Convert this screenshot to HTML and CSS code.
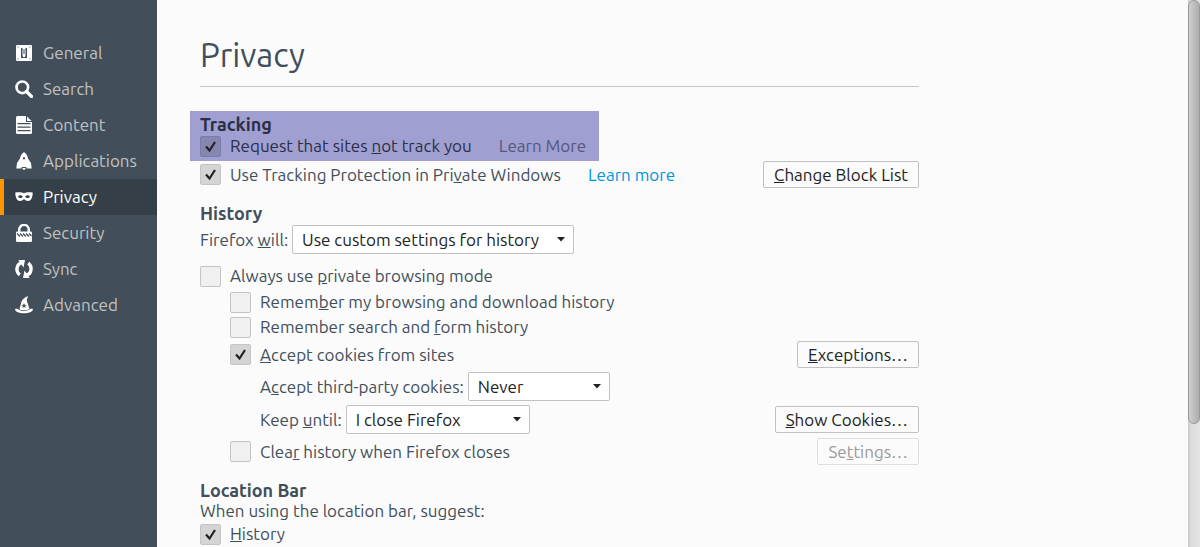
FILE: index.html
```html
<!DOCTYPE html>
<html lang="en">
  <head>
    <meta charset="UTF-8" />
    <meta name="viewport" content="width=device-width, initial-scale=1.0" />
    <title>Privacy</title>
    <link rel="stylesheet" href="styles.css">
  </head>
  <body>
    <nav class="sidebar">
      <a href="#general" class="nav-item">
        <svg class="icon" viewBox="0 0 18 18">
          <path fill-rule="evenodd" d="M2 1h14A1 1 0 0 1 17 2v14a1 1 0 0 1-1 1H2a1 1 0 0 1-1-1V2a1 1 0 0 1 1-1zM6 4v10h6V4zM2.500 2.500v1h1v-1zm12 0v1h1v-1zM2.500 14.500v1h1v-1zm12 0v1h1v-1z" />
          <path d="M7.500 4h3v7l-.5 2H8l-.5-2z" />
          <path d="M9 5v5" stroke="#424f5a" stroke-width="1" />
        </svg>
        General
      </a>
      <a href="#search" class="nav-item">
        <svg class="icon" viewBox="0 0 18 18">
          <circle cx="7.300" cy="7.300" r="5.800" fill="none" stroke="#fff" stroke-width="2.600" />
          <path d="M11.500 11.500l5 5" stroke="#fff" stroke-width="3.200" stroke-linecap="round" />
        </svg>
        Search
      </a>
      <a href="#content" class="nav-item">
        <svg class="icon" viewBox="0 0 18 18">
          <path fill-rule="evenodd" d="M2.500 0H11v6h6v10.500a1.500 1.500 0 0 1-1.500 1.500h-13A1.500 1.500 0 0 1 1 16.500v-15A1.500 1.500 0 0 1 2.500 0zM2.500 7v1.300h13V7zm0 3.500v1.300h13v-1.300zm0 3.500v1.300h13V14z" />
          <path d="M12 0.500L16.500 5H12z" />
        </svg>
        Content
      </a>
      <a href="#applications" class="nav-item">
        <svg class="icon" viewBox="0 0 18 18">
          <path fill-rule="evenodd" d="M9 0c2 1.400 3.600 3.500 4 6.500l3 4.500.7 5.500H12l-1-1.500H7l-1 1.500H1.300L2 11l3-4.500C5.400 3.500 7 1.400 9 0zm0 4.200L7.500 7.200h3z" />
          <path d="M7 16h4l-2 2.500z" />
        </svg>
        Applications
      </a>
      <a href="#privacy" class="nav-item active">
        <svg class="icon" viewBox="0 0 18 18">
          <path fill-rule="evenodd" d="M0.300 4.500C3.500 4 7 4 9 5.300c2-1.300 5.500-1.300 8.700-.8.100 3-.7 6.200-2.700 8-2.200.9-4.500.2-6-1.600-1.500 1.800-3.800 2.500-6 1.600-2-1.800-2.800-5-2.700-8zM3 8.500c1.300 2 3.300 1.900 5 .4C6.600 7 4.500 6.800 3 8.500zm12 0c-1.500-1.700-3.600-1.500-5 .4 1.700 1.500 3.700 1.600 5-.4z" />
        </svg>
        Privacy
      </a>
      <a href="#security" class="nav-item">
        <svg class="icon" viewBox="0 0 18 18">
          <path d="M4.200 8V5.700a4.800 4.800 0 0 1 9.600 0V8" fill="none" stroke="#fff" stroke-width="2.400" />
          <rect x="1" y="7.500" width="16" height="10.500" rx="1.200" />
          <path d="M2 9.500l3 3M5 9.500l3 3M8 9.500l3 3M11 9.500l3 3M14 9.500l2.500 2.500" stroke="#424f5a" stroke-width="1.300" />
        </svg>
        Security
      </a>
      <a href="#sync" class="nav-item">
        <svg class="icon" viewBox="0 0 18 18">
          <path d="M7 2.600C.800 4.200.600 11.800 4.800 14.800" fill="none" stroke="#fff" stroke-width="3.400" />
          <path d="M3.300 0H10L8.500 7.500zM14.700 18H8l1.500-7.500z" />
          <path d="M11 15.400C17.200 13.800 17.400 6.200 13.200 3.200" fill="none" stroke="#fff" stroke-width="3.400" />
        </svg>
        Sync
      </a>
      <a href="#advanced" class="nav-item">
        <svg class="icon" viewBox="0 0 18 18">
          <path fill-rule="evenodd" d="M13 0l-1.300 4.500L14.500 13c-2.500 1.700-7.700 1.700-10 .2L6.500 5.500C7.700 3 10 1 13 0zM9 7l-.7 1.800-1.900.1 1.500 1.200-.5 1.900L9 11l1.600 1-.5-1.900 1.500-1.200-1.900-.1z" />
          <path d="M0 13.200c1-.7 2-.5 3-.2 2 2.500 10 2.500 12 0 1-.3 2-.5 3 .2-.7 5.500-17.300 5.500-18 0z" />
        </svg>
        Advanced
      </a>
    </nav>

    <main class="main">
      <div class="pane">
        <h1 class="title">Privacy</h1>

        <section class="group">
          <div class="highlight">
            <h2>Tracking</h2>
            <div class="row">
              <input type="checkbox" id="dnt" checked />
              <label for="dnt">Request that sites <u>n</u>ot track you</label>
              <a href="#dnt-info" class="learn muted">Learn More</a>
            </div>
          </div>
          <div class="row tall">
            <input type="checkbox" id="protection" checked />
            <label for="protection">Use Tracking Protection in Pri<u>v</u>ate Windows</label>
            <a href="#protection-info" class="learn">Learn more</a>
            <button type="button" class="btn"><u>C</u>hange Block List</button>
          </div>
        </section>

        <section class="group">
          <h2>History</h2>
          <div class="field mode">
            <label for="history-mode">Firefox <u>w</u>ill:</label>
            <select id="history-mode" class="wide">
              <option>Use custom settings for history</option>
            </select>
          </div>
          <div class="row">
            <input type="checkbox" id="private" />
            <label for="private">Always use <u>p</u>rivate browsing mode</label>
          </div>
          <div class="indent options">
            <div class="row">
              <input type="checkbox" id="remember" />
              <label for="remember">Remem<u>b</u>er my browsing and download history</label>
            </div>
            <div class="row">
              <input type="checkbox" id="forms" />
              <label for="forms">Remember search and <u>f</u>orm history</label>
            </div>
            <div class="cookies">
              <div class="row tall">
                <input type="checkbox" id="cookies" checked />
                <label for="cookies"><u>A</u>ccept cookies from sites</label>
                <button type="button" class="btn"><u>E</u>xceptions…</button>
              </div>
              <div class="field indent">
                <label for="third-party">A<u>c</u>cept third-party cookies:</label>
                <select id="third-party" class="narrow">
                  <option>Never</option>
                </select>
              </div>
              <div class="field indent">
                <label for="keep">Keep <u>u</u>ntil:</label>
                <select id="keep" class="medium">
                  <option>I close Firefox</option>
                </select>
                <button type="button" class="btn"><u>S</u>how Cookies…</button>
              </div>
              <div class="row tall">
                <input type="checkbox" id="clear" />
                <label for="clear">Clea<u>r</u> history when Firefox closes</label>
                <button type="button" class="btn" disabled>Se<u>t</u>tings…</button>
              </div>
            </div>
          </div>
        </section>

        <section class="group">
          <h2>Location Bar</h2>
          <p>When using the location bar, suggest:</p>
          <div class="row">
            <input type="checkbox" id="suggest-history" checked />
            <label for="suggest-history"><u>H</u>istory</label>
          </div>
        </section>
      </div>
    </main>

    <div class="scrollbar">
      <div class="thumb"></div>
    </div>
  </body>
</html>
```

FILE: styles.css
```css
* {
  box-sizing: border-box;
}
body {
  display: flex;
  height: 100vh;
  margin: 0;
  overflow: hidden;
  background: #fbfbfb;
  color: #424f5a;
  font: 17px/20px Ubuntu, "Noto Sans", sans-serif;
}

/* Sidebar */
.sidebar {
  flex: none;
  width: 157px;
  padding-top: 35px;
  background: #424f5a;
}
.nav-item {
  display: flex;
  align-items: center;
  gap: 10px;
  height: 36px;
  padding-left: 11px;
  border-left: 4px solid transparent;
  color: #c1c1c1;
  text-decoration: none;
}
.nav-item.active {
  background: #343f48;
  border-left-color: #ff9500;
  color: #fff;
}
.icon {
  width: 18px;
  height: 18px;
  fill: #fff;
}

/* Content */
.main {
  flex: 1;
  padding: 0 43px;
  white-space: nowrap;
}
.pane {
  max-width: 719px;
}
.title {
  height: 87px;
  margin: 0 0 24px;
  padding-top: 35px;
  border-bottom: 1px solid #c8c8c8;
  font-size: 33px;
  font-weight: normal;
  line-height: 40px;
}
.group {
  margin-bottom: 15px;
}
h2 {
  margin: 0;
  font-size: 18px;
  line-height: 20px;
}
p {
  margin: 0;
  line-height: 22px;
}
.highlight {
  width: fit-content;
  margin-left: -10px;
  padding: 3px 13px 3px 10px;
  background: #a09fd2;
  color: #2b2f45;
}
.row,
.field {
  display: flex;
  align-items: center;
}
.row {
  gap: 9px;
  min-height: 24px;
}
.row.tall {
  min-height: 27px;
}
.field {
  gap: 4px;
}
.mode {
  margin: 2px 0 10px;
}
.indent {
  margin-left: 30px;
}
.options {
  display: grid;
  gap: 1px;
  padding-top: 2px;
}
.cookies {
  display: grid;
  gap: 4px;
  margin-top: 1px;
}
.learn {
  margin-left: 18px;
  color: #0095dd;
  text-decoration: none;
}
.learn.muted {
  color: #56567a;
}

/* Controls */
input[type="checkbox"] {
  appearance: none;
  flex: none;
  width: 21px;
  height: 21px;
  margin: 0;
  border: 1px solid #c4c4c4;
  border-radius: 2px;
  background: #f0f0f0;
}
input[type="checkbox"]:checked {
  background: #d4d4d4 url("data:image/svg+xml,%3Csvg xmlns='http://www.w3.org/2000/svg' viewBox='0 0 19 19'%3E%3Cpath d='M5 9.500l3.500 4L14 5' fill='none' stroke='%23222' stroke-width='2.200'/%3E%3C/svg%3E");
}
.highlight input[type="checkbox"]:checked {
  background-color: #8786b0;
  border-color: #7d7ca6;
}
select {
  appearance: none;
  height: 29px;
  padding: 0 9px;
  border: 1px solid #c1c1c1;
  border-radius: 2px;
  background: #fff url("data:image/svg+xml,%3Csvg xmlns='http://www.w3.org/2000/svg' width='8' height='5'%3E%3Cpath d='M0 0h8L4 4.500z' fill='%23222'/%3E%3C/svg%3E") no-repeat right 8px center;
  color: #222;
  font: inherit;
}
.wide {
  width: 282px;
}
.narrow {
  width: 142px;
}
.medium {
  width: 184px;
}
.btn {
  height: 27px;
  margin-left: auto;
  padding: 0 10px;
  border: 1px solid #c1c1c1;
  border-radius: 2px;
  background: #fbfbfb;
  color: #222;
  font: inherit;
}
.btn:disabled {
  border-color: #dedede;
  color: #999;
}

/* Scrollbar */
.scrollbar {
  flex: none;
  width: 12px;
  background: linear-gradient(to right, #c9c9c9, #dcdcdc 3px, #e3e3e3);
}
.thumb {
  height: 424px;
  border: 1px solid #999;
  border-radius: 6px;
  background: linear-gradient(to right, #cfcfcf, #adadad);
}
```
